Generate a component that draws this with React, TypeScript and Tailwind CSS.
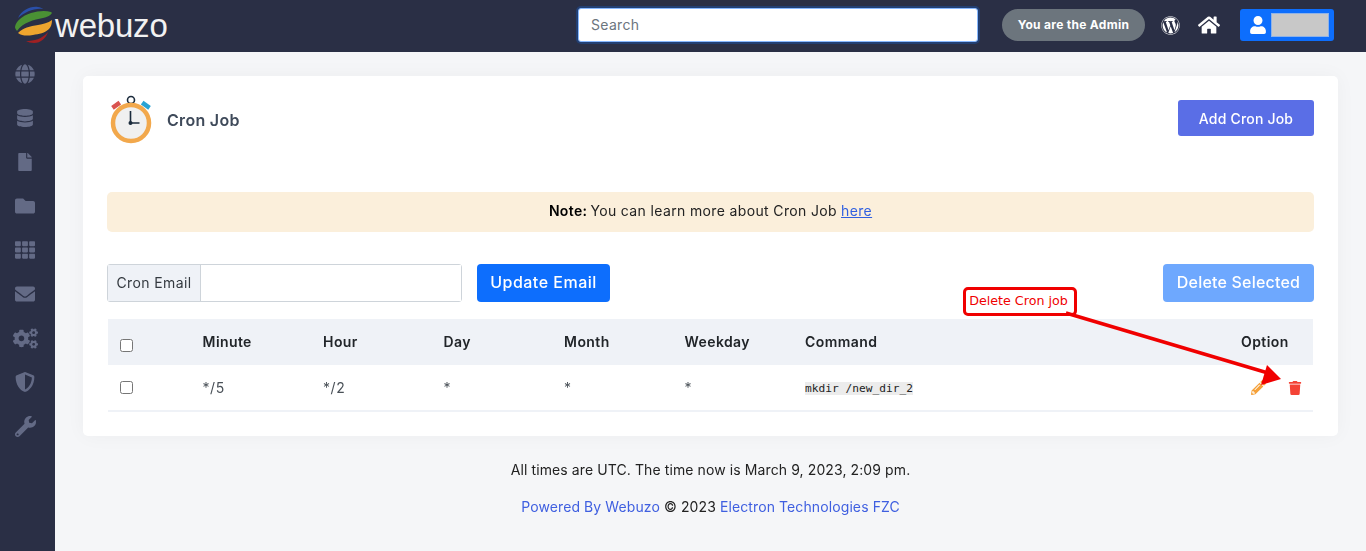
import { FaCogs, FaDatabase, FaEnvelope, FaFile, FaFolder, FaGlobe, FaHome, FaPencilAlt, FaShieldAlt, FaTh, FaTrash, FaUser, FaWordpress, FaWrench } from 'react-icons/fa'

const sideIcons = [
  { Icon: FaGlobe, size: 20 },
  { Icon: FaDatabase, size: 18 },
  { Icon: FaFile, size: 18 },
  { Icon: FaFolder, size: 20 },
  { Icon: FaTh, size: 20 },
  { Icon: FaEnvelope, size: 20 },
  { Icon: FaCogs, size: 25 },
  { Icon: FaShieldAlt, size: 20 },
  { Icon: FaWrench, size: 21 },
]

const columns = ['Minute', 'Hour', 'Day', 'Month', 'Weekday']
const values = ['*/5', '*/2', '*', '*', '*']

function Logo() {
  return (
    <svg width="38" height="38" viewBox="0 0 38 38" className="shrink-0">
      <path d="M4 12C8 4 16 0 24 1c2 0 4 1 5 2C20 2 11 6 4 12z" fill="#2a4fa8" />
      <path d="M1 21C2 15 8 10 17 7c7-2 14-3 20-1l1 1c-2 3-5 4-9 5-9 2-20 4-26 13-1-1-2-3-2-4z" fill="#4a9134" />
      <path d="M4 27c5-5 12-7 20-8 5-1 10-2 14-5 0 4-1 7-3 9-4 4-10 5-16 6-6 1-11 1-15-2z" fill="#eea52e" />
      <path d="M12 35c8 0 16-2 22-9-2 6-7 11-14 11-3 0-6-1-8-2z" fill="#a02022" />
    </svg>
  )
}

function Stopwatch() {
  return (
    <svg width="44" height="50" viewBox="0 0 44 50">
      <circle cx="22" cy="6" r="3.5" fill="none" stroke="#1b2b3c" strokeWidth="1.6" />
      <rect x="2.5" y="9" width="9" height="4.5" transform="rotate(-35 7 11)" fill="#d9534f" />
      <rect x="32.5" y="9" width="9" height="4.5" transform="rotate(35 37 11)" fill="#29a3d4" />
      <circle cx="22" cy="29" r="18" fill="#f0f0f0" stroke="#f2a84c" strokeWidth="4.5" />
      <path d="M21.5 17v12h9" fill="none" stroke="#1b2b3c" strokeWidth="1.6" />
      <circle cx="21.5" cy="29" r="2" fill="#1b2b3c" />
    </svg>
  )
}

export default function App() {
  return (
    <div className="relative flex h-[551px] flex-col overflow-hidden bg-[#f5f6f8] font-['Inter','Liberation_Sans',sans-serif] text-[14px] text-[#212529]">
      <header className="flex h-[52px] shrink-0 items-center bg-[#2a2f45] pb-[2px] pr-8">
        <div className="flex w-[578px] items-center pl-[14px]">
          <Logo />
          <span className="ml-[3px] font-['Liberation_Sans',sans-serif] text-[33px] leading-none tracking-[-0.2px] text-[#f2f2f2]">webuzo</span>
        </div>
        <input
          autoFocus
          placeholder="Search"
          className="-mt-[1px] h-[34px] w-[400px] rounded-[3px] border border-[#86b7fe] bg-white px-[12px] text-[14px] tracking-[0.3px] text-[#212529] shadow-[0_0_0_2px_rgba(13,110,253,0.25)] outline-none placeholder:text-[#6c757d]"
        />
        <span className="ml-[24px] flex h-[32px] w-[143px] items-center justify-center rounded-full bg-[#6c757d] text-[12px] font-bold tracking-[0.3px] text-white">You are the Admin</span>
        <FaWordpress className="ml-[16px] text-white" size={19} />
        <FaHome className="ml-[18px] text-white" size={22} />
        <div className="ml-[20px] flex h-[32px] w-[94px] items-center gap-[4px] rounded-[3px] bg-[#0d6efd] pl-[9px]">
          <FaUser className="text-white" size={18} />
          <div className="h-[24px] w-[58px] border border-[#8fb3e8] bg-[#c8c8c8]" />
        </div>
      </header>

      <div className="flex min-h-0 flex-1">
        <aside className="flex w-[55px] shrink-0 flex-col items-center bg-[#2a2f45] pr-[5px] text-[#636a85]">
          {sideIcons.map(({ Icon, size }, i) => (
            <div key={i} className="flex h-[44px] w-full items-center justify-center">
              <Icon size={size} />
            </div>
          ))}
        </aside>

        <main className="flex-1 px-[28px] pt-[24px]">
          <section className="h-[360px] rounded-[5px] bg-white px-[24px] pt-[24px] shadow-[0_0_20px_rgba(0,0,0,0.04)]">
            <div className="flex h-[36px] items-center justify-between">
              <div className="flex items-center">
                <div className="ml-[2px] mt-[2px] w-[44px]">
                  <Stopwatch />
                </div>
                <h1 className="ml-[14px] mt-[4px] text-[16px] font-semibold tracking-[0.3px] text-[#3f4a5a]">Cron Job</h1>
              </div>
              <button className="h-[36px] w-[136px] rounded-[3px] bg-[#5a6ee6] text-[14px] font-medium tracking-[0.2px] text-white">Add Cron Job</button>
            </div>

            <div className="mt-[56px] flex h-[40px] items-center justify-center rounded-[5px] bg-[#fbefdb] pb-[4px] text-[14px] tracking-[0.36px] text-[#222]">
              <b className="font-semibold text-black">Note:</b>
              <span className="ml-[3px]">You can learn more about Cron Job</span>
              <a className="ml-[4px] text-[#2f5fe0] underline">here</a>
            </div>

            <div className="mt-[32px] flex items-center">
              <div className="flex h-[38px] w-[355px] rounded-[3px] border border-[#ced4da]">
                <span className="flex w-[93px] items-center justify-center border-r border-[#ced4da] bg-[#eff2f7] pb-[2px] text-[14px] tracking-[0.4px] text-[#343a40]">Cron Email</span>
                <input className="min-w-0 flex-1 bg-white outline-none" />
              </div>
              <button className="ml-[15px] h-[38px] w-[133px] rounded-[4px] bg-[#0d6efd] pb-[2px] text-[16px] font-medium tracking-[0.5px] text-white">Update Email</button>
              <button className="ml-auto h-[38px] w-[151px] rounded-[4px] bg-[#6ea8fe] pb-[2px] text-[16px] font-medium tracking-[0.2px] text-white">Delete Selected</button>
            </div>

            <table className="mx-[1px] mt-[17px] w-[1205px] table-fixed border-collapse">
              <thead>
                <tr className="h-[46px] bg-[#eff2f7] text-left text-[14px] font-semibold tracking-[0.4px] text-[#212529]">
                  <th className="w-[94.6px] pl-[12px]">
                    <input type="checkbox" className="mt-[6px] block h-[13px] w-[13px]" />
                  </th>
                  {columns.map(c => (
                    <th key={c} className="w-[120.5px] pb-[2px] font-semibold">{c}</th>
                  ))}
                  <th className="pb-[2px] font-semibold">Command</th>
                  <th className="w-[72px] pb-[2px] font-semibold">Option</th>
                </tr>
              </thead>
              <tbody>
                <tr className="h-[46px] border-b-2 border-[#eff2f7] text-[14px] tracking-[0.5px] text-[#495057]">
                  <td className="pl-[12px]">
                    <input type="checkbox" className="block h-[13px] w-[13px]" />
                  </td>
                  {values.map((v, i) => (
                    <td key={i}>{v}</td>
                  ))}
                  <td>
                    <code className="relative top-[-1px] bg-[#ececec] font-['DejaVu_Sans_Mono',monospace] text-[11.2px] tracking-normal text-[#222]">mkdir /new_dir_2</code>
                  </td>
                  <td>
                    <div className="flex items-center pl-[10px]">
                      <FaPencilAlt className="text-[#f5a13a]" size={15} />
                      <FaTrash className="ml-[22px] text-[#f44336]" size={14} />
                    </div>
                  </td>
                </tr>
              </tbody>
            </table>
          </section>

          <p className="mt-[23px] text-center text-[14px] tracking-[0.1px] text-[#222]">All times are UTC. The time now is March 9, 2023, 2:09 pm.</p>
          <p className="mt-[16px] text-center text-[14px] tracking-[0.1px] text-[#222]">
            <a className="text-[#3f5fe0]">Powered By Webuzo</a> © 2023 <a className="text-[#3f5fe0]">Electron Technologies FZC</a>
          </p>
        </main>
      </div>

      {/* annotation drawn over the page */}
      <div className="absolute left-[963px] top-[287px] flex h-[29px] w-[114px] items-center justify-center rounded-[5px] border-[3px] border-[#f00000] bg-white pb-[1px] pr-[3px] font-['DejaVu_Sans',sans-serif] text-[12.7px] text-[#f00000]">Delete Cron job</div>
      <svg className="absolute left-[1060px] top-[310px]" width="230" height="80" viewBox="0 0 230 80">
        <path d="M6 3 L208 63" stroke="#f00000" strokeWidth="3.4" />
        <path d="M221 69 L201 75 L207 55 Z" fill="#f00000" />
      </svg>
    </div>
  )
}
